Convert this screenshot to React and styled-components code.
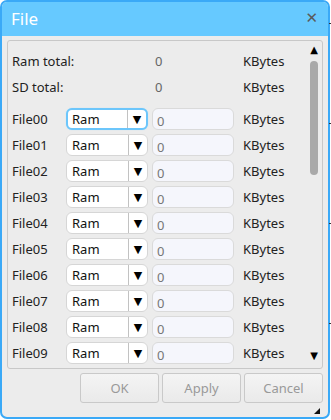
import React from "react";
import styled, { createGlobalStyle } from "styled-components";

const Global = createGlobalStyle`
  html, body { margin: 0; padding: 0; background: #ffffff; }
  body { font-family: "Noto Sans", "DejaVu Sans", sans-serif; }
  * { box-sizing: border-box; }
`;

const Page = styled.div`
  position: relative;
  width: 331px;
  height: 420px;
`;

const Tick = styled.div`
  position: absolute;
  left: 329px;
  width: 2px;
  height: 1px;
  background: #333;
`;

const Window = styled.div`
  width: 330px;
  height: 419px;
  border: 2px solid #3aa9f7;
  border-radius: 7px;
  background: #ececec;
  display: flex;
  flex-direction: column;
  overflow: hidden;
`;

const TitleBar = styled.div`
  height: 34px;
  flex: none;
  background: #66c9ff;
  display: flex;
  align-items: center;
  justify-content: space-between;
  padding: 0 10px 0 9px;
`;

const Title = styled.span`
  color: #ffffff;
  font-size: 17px;
  line-height: 1;
  margin-top: -1px;
`;

const Close = styled.span`
  color: #5a5a5a;
  font-size: 15px;
  font-weight: bold;
  font-family: "DejaVu Sans", sans-serif;
  line-height: 1;
  margin-top: -1px;
`;

const Body = styled.div`
  flex: 1;
  display: flex;
  flex-direction: column;
  padding: 4px 5px 0 5px;
`;

const Panel = styled.div`
  height: 329px;
  border: 1px solid #c8c8c8;
  border-radius: 3px;
  display: flex;
  overflow: hidden;
`;

const Content = styled.div`
  flex: 1;
  overflow: hidden;
  padding: 7px 0 0 4px;
`;

const Row = styled.div`
  height: 26px;
  display: grid;
  grid-template-columns: 54px 82px 4px 82px 9px auto;
  align-items: center;
  font-size: 13px;
  color: #222;
  margin-top: ${(p) => (p.$gap ? "6px" : "0")};
`;

const Label = styled.span`
  grid-column: 1;
  white-space: nowrap;
`;

const Value = styled.span`
  grid-column: 4;
  color: #666;
  padding-left: 3px;
`;

const Unit = styled.span`
  grid-column: 6;
`;

const Select = styled.div`
  grid-column: 2;
  height: 22px;
  border: ${(p) => (p.$focus ? "2px solid #6cc6fb" : "1px solid #d6d6d6")};
  border-radius: 6px;
  background: #fff;
  display: flex;
  align-items: stretch;
  box-shadow: ${(p) => (p.$focus ? "0 0 1px #a8dcfb" : "none")};
`;

const SelectText = styled.span`
  flex: 1;
  display: flex;
  align-items: center;
  padding-left: ${(p) => (p.$focus ? "4px" : "5px")};
  color: #111;
`;

const SelectArrow = styled.span`
  width: 19px;
  border-left: 1px solid #c2c2c2;
  display: flex;
  align-items: center;
  justify-content: center;
  font-size: 11px;
  color: #000;
  font-family: "DejaVu Sans", sans-serif;
`;

const Input = styled.div`
  grid-column: 4;
  height: 22px;
  border: 1px solid #dadada;
  border-radius: 6px;
  background: #f5f6fc;
  color: #777;
  display: flex;
  align-items: center;
  padding: 3px 0 0 4px;
`;

const ScrollBar = styled.div`
  width: 13px;
  flex: none;
  display: flex;
  flex-direction: column;
  align-items: center;
  padding: 3px 3px 6px 0;
`;

const ArrowGlyph = styled.span`
  font-size: 10px;
  line-height: 12px;
  height: 12px;
  color: #000;
  font-family: "DejaVu Sans", sans-serif;
`;

const Track = styled.div`
  flex: 1;
  width: 100%;
  display: flex;
  justify-content: center;
  padding-top: 5px;
`;

const Thumb = styled.div`
  width: 8px;
  height: 114px;
  border-radius: 4px;
  background: #a9a9a9;
`;

const Footer = styled.div`
  display: flex;
  justify-content: flex-end;
  gap: 3px;
  margin-top: 4px;
`;

const Button = styled.div`
  width: 79px;
  height: 30px;
  border: 1px solid #c9c9c9;
  border-radius: 3px;
  background: linear-gradient(#f4f4f4, #eaeaea);
  color: #999;
  font-size: 13px;
  display: flex;
  align-items: center;
  justify-content: center;
`;

const GripRow = styled.div`
  flex: 1;
  display: flex;
  justify-content: flex-end;
  align-items: flex-end;
  padding: 0 3px 3px 0;
`;

const Grip = styled.div`
  width: 0;
  height: 0;
  border-style: solid;
  border-width: 0 0 6px 6px;
  border-color: transparent transparent #111 transparent;
`;

const files = Array.from({ length: 10 }, (_, i) => `File${String(i).padStart(2, "0")}`);

export default function App() {
  return (
    <Page>
      <Global />
      <Window>
        <TitleBar>
          <Title>File</Title>
          <Close>✕</Close>
        </TitleBar>
        <Body>
          <Panel>
            <Content>
              <Row>
                <Label>Ram total:</Label>
                <Value>0</Value>
                <Unit>KBytes</Unit>
              </Row>
              <Row>
                <Label>SD total:</Label>
                <Value>0</Value>
                <Unit>KBytes</Unit>
              </Row>
              {files.map((f, i) => (
                <Row key={f} $gap={i === 0}>
                  <Label>{f}</Label>
                  <Select $focus={i === 0}>
                    <SelectText $focus={i === 0}>Ram</SelectText>
                    <SelectArrow>▼</SelectArrow>
                  </Select>
                  <Input>0</Input>
                  <Unit>KBytes</Unit>
                </Row>
              ))}
            </Content>
            <ScrollBar>
              <ArrowGlyph>▲</ArrowGlyph>
              <Track>
                <Thumb />
              </Track>
              <ArrowGlyph>▼</ArrowGlyph>
            </ScrollBar>
          </Panel>
          <Footer>
            <Button>OK</Button>
            <Button>Apply</Button>
            <Button>Cancel</Button>
          </Footer>
          <GripRow>
            <Grip />
          </GripRow>
        </Body>
      </Window>
      <Tick style={{ top: 23 }} />
      <Tick style={{ top: 123 }} />
      <Tick style={{ top: 223 }} />
      <Tick style={{ top: 323 }} />
    </Page>
  );
}
